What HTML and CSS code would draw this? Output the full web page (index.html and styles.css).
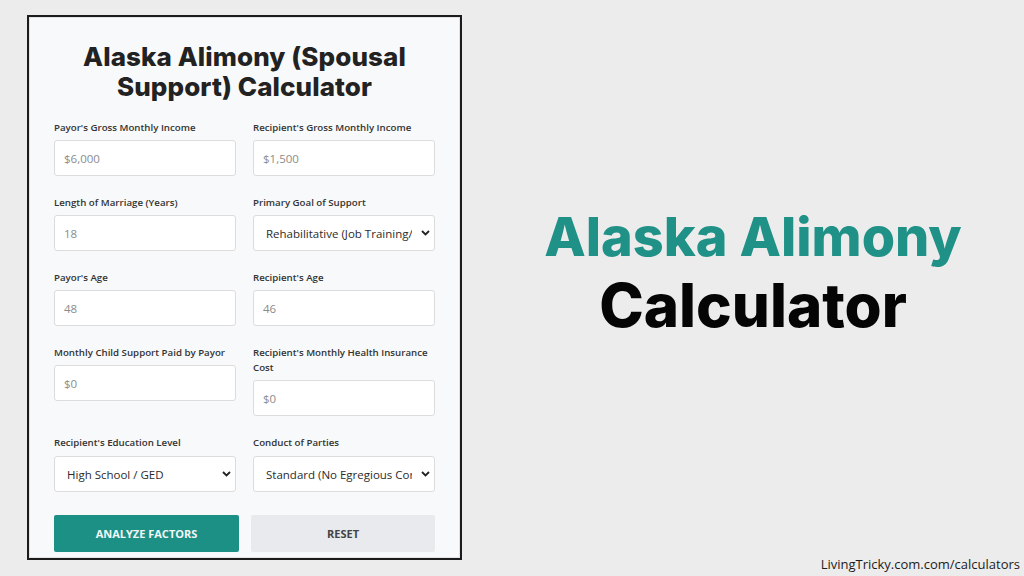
FILE: index.html
```html
<!DOCTYPE html>
<html lang="en">
<head>
<meta charset="utf-8">
<title>Alaska Alimony Calculator</title>
<link rel="stylesheet" href="styles.css">
</head>
<body>
<div class="page">
  <div class="panel">
    <h1 class="calc-title">Alaska Alimony (Spousal Support) Calculator</h1>
    <div class="form-grid">
      <div class="field">
        <label class="label">Payor's Gross Monthly Income</label>
        <input class="input" type="text" placeholder="$6,000">
      </div>
      <div class="field">
        <label class="label">Recipient's Gross Monthly Income</label>
        <input class="input" type="text" placeholder="$1,500">
      </div>
      <div class="field">
        <label class="label">Length of Marriage (Years)</label>
        <input class="input" type="text" placeholder="18">
      </div>
      <div class="field">
        <label class="label">Primary Goal of Support</label>
        <div class="select-wrap">
          <select class="select"><option>Rehabilitative (Job Training/Education)</option></select>
          <svg class="chev" width="9" height="6" viewBox="0 0 9 6"><path d="M1 1 L4.5 4.5 L8 1" fill="none" stroke="#222" stroke-width="1.8"/></svg>
        </div>
      </div>
      <div class="field">
        <label class="label">Payor's Age</label>
        <input class="input" type="text" placeholder="48">
      </div>
      <div class="field">
        <label class="label">Recipient's Age</label>
        <input class="input" type="text" placeholder="46">
      </div>
      <div class="field">
        <label class="label">Monthly Child Support Paid by Payor</label>
        <input class="input" type="text" placeholder="$0">
      </div>
      <div class="field">
        <label class="label">Recipient's Monthly Health Insurance Cost</label>
        <input class="input" type="text" placeholder="$0">
      </div>
      <div class="field">
        <label class="label">Recipient's Education Level</label>
        <div class="select-wrap">
          <select class="select"><option>High School / GED</option></select>
          <svg class="chev" width="9" height="6" viewBox="0 0 9 6"><path d="M1 1 L4.5 4.5 L8 1" fill="none" stroke="#222" stroke-width="1.8"/></svg>
        </div>
      </div>
      <div class="field">
        <label class="label">Conduct of Parties</label>
        <div class="select-wrap">
          <select class="select"><option>Standard (No Egregious Conduct)</option></select>
          <svg class="chev" width="9" height="6" viewBox="0 0 9 6"><path d="M1 1 L4.5 4.5 L8 1" fill="none" stroke="#222" stroke-width="1.8"/></svg>
        </div>
      </div>
    </div>
    <div class="buttons">
      <button class="btn btn-primary">ANALYZE FACTORS</button>
      <button class="btn btn-secondary">RESET</button>
    </div>
  </div>
  <div class="side">
    <div class="hero">
      <div class="hero-1">Alaska Alimony</div>
      <div class="hero-2">Calculator</div>
    </div>
    <div class="footer">LivingTricky.com.com/calculators</div>
  </div>
</div>
</body>
</html>
```
FILE: styles.css
```css
* { box-sizing: border-box; }
html, body { margin: 0; padding: 0; }
body {
  background: #ececec;
  font-family: "Open Sans", "Liberation Sans", sans-serif;
  width: 1024px;
  height: 576px;
  overflow: hidden;
}
.page {
  display: flex;
  height: 576px;
}
.panel {
  margin: 15px 0 0 27px;
  width: 435px;
  height: 545px;
  border: 2px solid #1b1b1b;
  box-shadow: inset 0 0 0 1px #e2e3e5;
  background: #f8f9fa;
  padding: 25px 25px 0 25px;
  overflow: hidden;
  flex-shrink: 0;
}
.calc-title {
  margin: 0 0 18px 0;
  text-align: center;
  font-family: "Inter", "Liberation Sans", sans-serif;
  font-weight: 800;
  font-size: 26px;
  line-height: 30px;
  color: #222;
  padding: 0 4px;
  letter-spacing: 0.1px;
}
.form-grid {
  display: grid;
  grid-template-columns: 182px 182px;
  column-gap: 17px;
  row-gap: 19px;
  align-items: start;
}
.field {
  display: flex;
  flex-direction: column;
}
.label {
  font-size: 9.7px;
  line-height: 15px;
  font-weight: 600;
  color: #333;
  margin-bottom: 5px;
}
.form-grid .field:nth-child(n+9) .label { margin-bottom: 6px; }
.input, .select {
  height: 36px;
  width: 100%;
  border: 1px solid #dcdcdc;
  border-radius: 3px;
  background: #fff;
  font-family: "Open Sans", "Liberation Sans", sans-serif;
  font-size: 11.5px;
  color: #333;
  padding: 0 9px;
  outline: none;
}
.input::placeholder { color: #8b8b8b; }
.select-wrap { position: relative; }
.select {
  appearance: none;
  -webkit-appearance: none;
  padding: 0 22px 0 12px;
  font-size: 11.5px;
  color: #2b2b2b;
}
.chev {
  position: absolute;
  right: 5px;
  top: 15px;
  pointer-events: none;
}
.buttons {
  display: flex;
  gap: 12px;
  margin-top: 23px;
}
.btn {
  height: 37px;
  border: none;
  border-radius: 2px;
  font-family: "Open Sans", "Liberation Sans", sans-serif;
  font-size: 11px;
  font-weight: 700;
}
.btn-primary {
  width: 185px;
  background: #1d9086;
  color: #f2f7f6;
}
.btn-secondary {
  width: 184px;
  background: #e8eaed;
  color: #444;
}
.side {
  flex: 1;
  display: flex;
  flex-direction: column;
  padding-left: 20px;
}
.hero {
  flex: 1;
  display: flex;
  flex-direction: column;
  align-items: center;
  justify-content: center;
  padding-bottom: 14px;
  font-family: "Inter", "Liberation Sans", sans-serif;
  font-weight: 800;
}
.hero-1 {
  color: #1f9187;
  font-size: 54px;
  line-height: 68px;
}
.hero-2 {
  color: #050505;
  font-size: 60px;
  line-height: 68px;
}
.footer {
  text-align: right;
  padding-right: 4px;
  font-size: 13px;
  color: #1c1c1c;
  line-height: 18px;
  margin-bottom: 3px;
}
```
